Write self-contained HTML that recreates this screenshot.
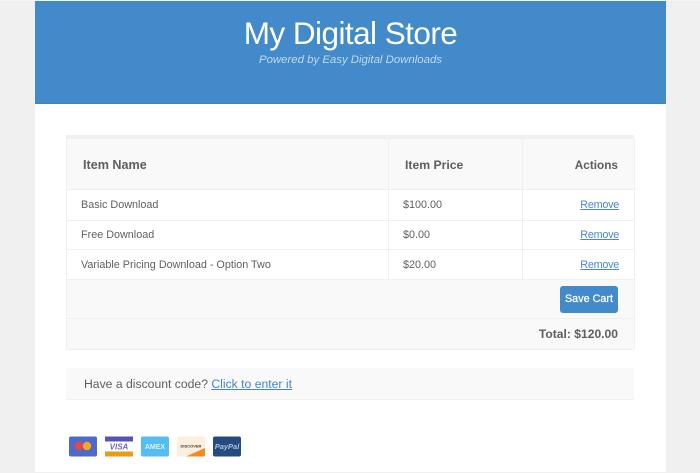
<!DOCTYPE html>
<html><head><meta charset="utf-8"><style>
html,body{margin:0;padding:0;width:700px;height:473px;overflow:hidden;background:#f0f0f0}
#w{position:absolute;left:0;top:0;width:700px;height:473px;filter:blur(.3px);font-family:"Liberation Sans",sans-serif;color:#5f5f5f}
.a{position:absolute}
.t{position:absolute;white-space:nowrap;line-height:16px}
.b{font-weight:bold;color:#5e5e5e;font-size:12.2px}
.c{font-size:10.8px}
.r{right:81px;color:#4a88c7;text-decoration:underline;font-size:10.8px;letter-spacing:-.25px}
.hl{position:absolute;background:#f0f0f0}
</style></head><body><div id="w">
<div class="a" style="left:0;top:0;width:700px;height:1px;background:#f6f6f6"></div>
<div class="a" style="left:35px;top:1px;width:631px;height:471px;background:#fff"></div>
<div class="a" style="left:35px;top:1px;width:631px;height:102px;background:#428aca;border-bottom:1px solid #3a84c6"></div>
<div class="t" style="left:35px;width:631px;top:14px;text-align:center;color:#fff;font:31.5px/38px 'Liberation Sans',sans-serif;letter-spacing:-.55px">My Digital Store</div>
<div class="t" style="left:35px;width:631px;top:52px;text-align:center;color:#c4d9ee;font:italic 11.4px/16px 'Liberation Sans',sans-serif">Powered by Easy Digital Downloads</div>

<div class="a" style="left:66px;top:135px;width:568px;height:4px;background:#f0f0f0"></div>
<div class="a" style="left:66px;top:139px;width:568px;height:51px;background:#f9f9f9"></div>
<div class="a" style="left:66px;top:280px;width:568px;height:69px;background:#f9f9f9;border-radius:0 0 3px 3px"></div>
<div class="hl" style="left:66px;top:139px;width:1px;height:210px"></div>
<div class="hl" style="left:634px;top:139px;width:1px;height:210px"></div>
<div class="hl" style="left:388px;top:139px;width:1px;height:141px"></div>
<div class="hl" style="left:522px;top:139px;width:1px;height:141px"></div>
<div class="hl" style="left:66px;top:189px;width:568px;height:1px"></div>
<div class="hl" style="left:66px;top:220px;width:568px;height:1px"></div>
<div class="hl" style="left:66px;top:249px;width:568px;height:1px"></div>
<div class="hl" style="left:66px;top:279px;width:568px;height:1px"></div>
<div class="hl" style="left:66px;top:318px;width:568px;height:1px"></div>
<div class="hl" style="left:66px;top:349px;width:568px;height:1px"></div>

<div class="t b" style="left:83px;top:157px;font-size:12.6px">Item Name</div>
<div class="t b" style="left:405px;top:157px">Item Price</div>
<div class="t b" style="right:82px;top:157px;font-size:11.8px">Actions</div>

<div class="t c" style="left:81px;top:197px">Basic Download</div>
<div class="t c" style="left:403px;top:197px">$100.00</div>
<div class="t r" style="top:197px">Remove</div>
<div class="t c" style="left:81px;top:227px">Free Download</div>
<div class="t c" style="left:403px;top:227px">$0.00</div>
<div class="t r" style="top:227px">Remove</div>
<div class="t c" style="left:81px;top:257px">Variable Pricing Download - Option Two</div>
<div class="t c" style="left:403px;top:257px">$20.00</div>
<div class="t r" style="top:257px">Remove</div>

<div class="a" style="left:560px;top:286px;width:58px;height:27px;background:#428aca;border-radius:3px;color:#fff;font-size:10.8px;line-height:27px;text-align:center;-webkit-text-stroke:.25px #fff">Save Cart</div>
<div class="t b" style="right:82px;top:326px;font-size:12.1px">Total: $120.00</div>

<div class="a" style="left:66px;top:368px;width:568px;height:31px;background:#f9f9f9;border-bottom:1px solid #f0f0f0"></div>
<div class="t" style="left:84px;top:376px;font-size:12.2px">Have a discount code? <span style="color:#3f86cc;text-decoration:underline">Click to enter it</span></div>

<svg class="a" style="left:0;top:0" width="700" height="473" viewBox="0 0 700 473">
<rect x="69" y="436.500" width="28" height="20" rx="2" fill="#4d6bc6"/>
<circle cx="79" cy="446" r="4.200" fill="#e8483f"/><circle cx="87" cy="446" r="4.200" fill="#f5a623"/>
<rect x="105" y="436.500" width="28" height="20" fill="#fff"/>
<rect x="105" y="436.500" width="28" height="5" fill="#5553b8"/>
<rect x="105" y="451.500" width="28" height="5" fill="#e69e12"/>
<text x="119" y="449.500" font-family="Liberation Sans" font-size="8" font-weight="bold" font-style="italic" text-anchor="middle" fill="#6a6abd">VISA</text>
<rect x="141" y="436.500" width="28" height="20" rx="2" fill="#56bdf0"/>
<text x="155" y="449" font-family="Liberation Sans" font-size="7" font-weight="bold" text-anchor="middle" fill="#d9f1fc">AMEX</text>
<rect x="177" y="436.500" width="28" height="20" rx="2" fill="#fdeedd"/>
<path d="M186 456.500 L205 448 V454.500 A2 2 0 0 1 203 456.500Z" fill="#f58b1e"/>
<text x="191" y="447.500" font-family="Liberation Sans" font-size="4" font-weight="bold" text-anchor="middle" fill="#4a3a30">DISCOVER</text>
<rect x="213" y="436.500" width="28" height="20" rx="2" fill="#264b7e"/>
<text x="227" y="449" font-family="Liberation Sans" font-size="7.500" font-weight="bold" font-style="italic" text-anchor="middle" fill="#a9c3e2">PayPal</text>
</svg>
<div class="a" style="left:0;top:472px;width:700px;height:1px;background:#f0f0f0"></div>
</div></body></html>
